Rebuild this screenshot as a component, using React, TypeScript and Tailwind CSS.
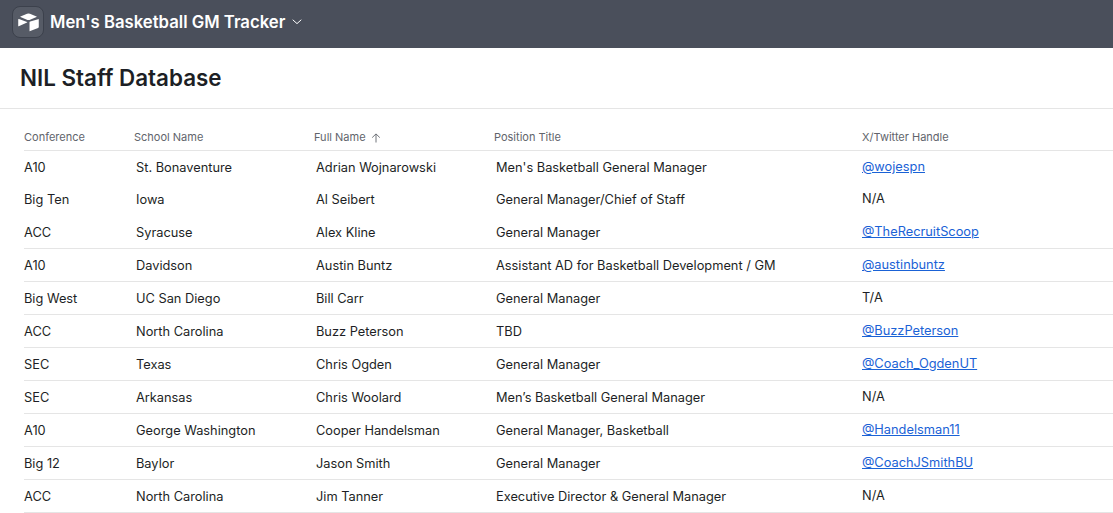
const rows = [
  { conf: "A10", school: "St. Bonaventure", name: "Adrian Wojnarowski", title: "Men's Basketball General Manager", handle: "@wojespn" },
  { conf: "Big Ten", school: "Iowa", name: "Al Seibert", title: "General Manager/Chief of Staff", handle: "N/A" },
  { conf: "ACC", school: "Syracuse", name: "Alex Kline", title: "General Manager", handle: "@TheRecruitScoop" },
  { conf: "A10", school: "Davidson", name: "Austin Buntz", title: "Assistant AD for Basketball Development / GM", handle: "@austinbuntz" },
  { conf: "Big West", school: "UC San Diego", name: "Bill Carr", title: "General Manager", handle: "T/A" },
  { conf: "ACC", school: "North Carolina", name: "Buzz Peterson", title: "TBD", handle: "@BuzzPeterson" },
  { conf: "SEC", school: "Texas", name: "Chris Ogden", title: "General Manager", handle: "@Coach_OgdenUT" },
  { conf: "SEC", school: "Arkansas", name: "Chris Woolard", title: "Men’s Basketball General Manager", handle: "N/A" },
  { conf: "A10", school: "George Washington", name: "Cooper Handelsman", title: "General Manager, Basketball", handle: "@Handelsman11" },
  { conf: "Big 12", school: "Baylor", name: "Jason Smith", title: "General Manager", handle: "@CoachJSmithBU" },
  { conf: "ACC", school: "North Carolina", name: "Jim Tanner", title: "Executive Director & General Manager", handle: "N/A" },
];

function Logo() {
  return (
    <div className="flex h-[32px] w-[32px] items-center justify-center rounded-[8px] border border-[#3c414c] bg-[#565b66]">
      <svg width="23" height="19" viewBox="0 0 22 18.5" fill="#ffffff">
        <path d="M9.6 0.8 L3.2 3.4 Q2.6 3.7 3.2 4 L10 6.7 Q11 7.1 12 6.7 L18.8 4 Q19.4 3.7 18.8 3.4 L12.4 0.8 Q11 0.2 9.6 0.8 Z" />
        <path d="M12 9 V17.2 Q12 17.9 12.7 17.6 L20.3 14.7 Q21 14.4 21 13.7 V6.4 Q21 5.7 20.3 6 L12.7 8.2 Q12 8.4 12 9 Z" />
        <path d="M1 6.3 V12.6 Q1 13.2 1.5 12.9 L9.6 9.3 Q10.1 9 9.6 8.8 L1.7 5.8 Q1 5.6 1 6.3 Z" />
      </svg>
    </div>
  );
}

export default function App() {
  return (
    <div className="h-[513px] w-[1113px] overflow-hidden bg-white font-['Inter',sans-serif] text-[#1d1f25]">
      <header className="flex h-[48px] items-center bg-[#4a4f5b] pb-[4px] pl-[12px] text-white">
        <Logo />
        <span className="ml-[6px] mt-[2px] text-[16.7px] font-semibold">Men's Basketball GM Tracker</span>
        <svg className="ml-[7px]" width="10" height="6" viewBox="0 0 10 6" fill="none" stroke="#ffffff" strokeWidth="1" strokeLinecap="round" strokeLinejoin="round">
          <path d="M1 1 L5 4.6 L9 1" />
        </svg>
      </header>

      <div className="flex h-[61px] items-center border-b border-[#e5e5e5] pl-[20px]">
        <h1 className="text-[22.4px] font-semibold">NIL Staff Database</h1>
      </div>

      <main className="pl-[24px]">
        <div className="mt-[15px] flex h-[27px] items-start border-b border-[#e5e5e5] text-[11px] leading-[27px] text-[#61646b]">
          <div className="w-[110px]">Conference</div>
          <div className="w-[180px]">School Name</div>
          <div className="flex w-[180px] items-center">
            Full Name
            <svg className="ml-[5px]" width="10" height="10" viewBox="0 0 10 10" fill="none" stroke="#61646b" strokeWidth="0.9">
              <path d="M5 9.5 V1 M1.2 4.6 L5 0.9 L8.8 4.6" />
            </svg>
          </div>
          <div className="w-[368px]">Position Title</div>
          <div>X/Twitter Handle</div>
        </div>

        {rows.map((r, i) => (
          <div
            key={r.name}
            className={`flex items-center text-[12.8px] ${
              i === 0 ? "h-[33px]" : i === 1 ? "h-[32px]" : "h-[33px] border-b border-[#e5e5e5] pt-[2px]"
            }`}
          >
            <div className="w-[112px]">{r.conf}</div>
            <div className="w-[180px]">{r.school}</div>
            <div className="w-[180px]">{r.name}</div>
            <div className="w-[366px]">{r.title}</div>
            {r.handle.startsWith("@") ? (
              <a className="mb-[2px] text-[#1a62d6] underline" href="#">
                {r.handle}
              </a>
            ) : (
              <div className="mb-[2px]">{r.handle}</div>
            )}
          </div>
        ))}
      </main>
    </div>
  );
}
